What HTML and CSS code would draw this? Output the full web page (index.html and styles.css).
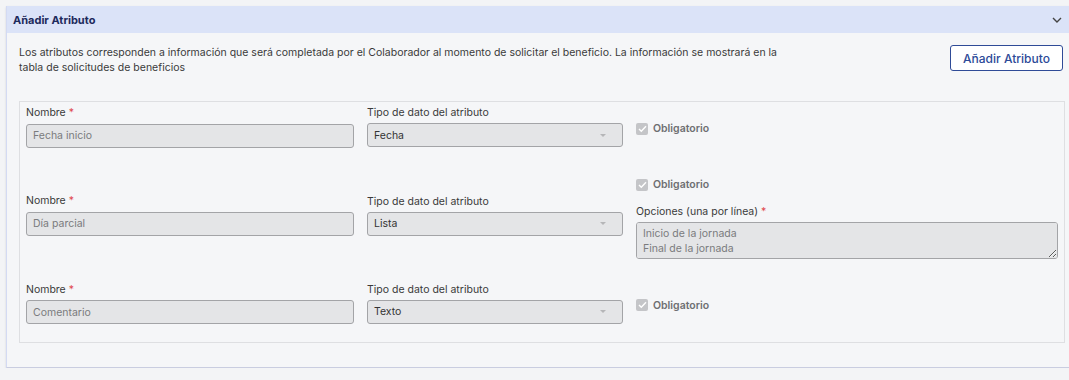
FILE: index.html
```html
<!DOCTYPE html>
<html lang="es">
<head>
    <meta charset="UTF-8">
    <meta name="viewport" content="width=device-width, initial-scale=1.0">
    <title>Añadir Atributo</title>
    <link rel="stylesheet" href="styles.css">
</head>
<body>
    <section class="panel">
        <header class="panel-header">
            <h2>Añadir Atributo</h2>
            <svg class="chevron" width="10" height="6" viewBox="0 0 10 6">
                <path d="M1 1l4 4 4-4" fill="none" stroke="#444" stroke-width="1.4"/>
            </svg>
        </header>

        <div class="panel-body">
            <div class="intro">
                <p>Los atributos corresponden a información que será completada por el Colaborador al momento de solicitar el beneficio. La información se mostrará en la tabla de solicitudes de beneficios</p>
                <button type="button" class="btn-outline">Añadir Atributo</button>
            </div>

            <div class="attr-list">
                <!-- fila 1 -->
                <div class="attr-row">
                    <div class="field">
                        <label>Nombre <span class="req">*</span></label>
                        <input type="text" class="input" value="Fecha inicio" disabled>
                    </div>
                    <div class="field">
                        <label>Tipo de dato del atributo</label>
                        <div class="select">Fecha<span class="caret"></span></div>
                    </div>
                    <div class="extra">
                        <div class="check"><span class="box"><svg width="9" height="8" viewBox="0 0 9 8"><path d="M1 4l2.3 2.3L8 1.3" fill="none" stroke="#fff" stroke-width="1.4"/></svg></span>Obligatorio</div>
                    </div>
                </div>

                <!-- fila 2 -->
                <div class="attr-row">
                    <div class="field">
                        <label>Nombre <span class="req">*</span></label>
                        <input type="text" class="input" value="Día parcial" disabled>
                    </div>
                    <div class="field">
                        <label>Tipo de dato del atributo</label>
                        <div class="select">Lista<span class="caret"></span></div>
                    </div>
                    <div class="extra extra-list">
                        <div class="check"><span class="box"><svg width="9" height="8" viewBox="0 0 9 8"><path d="M1 4l2.3 2.3L8 1.3" fill="none" stroke="#fff" stroke-width="1.4"/></svg></span>Obligatorio</div>
                        <label class="opt-label">Opciones (una por línea) <span class="req">*</span></label>
                        <textarea class="textarea" rows="2" disabled>Inicio de la jornada
Final de la jornada</textarea>
                    </div>
                </div>

                <!-- fila 3 -->
                <div class="attr-row">
                    <div class="field">
                        <label>Nombre <span class="req">*</span></label>
                        <input type="text" class="input" value="Comentario" disabled>
                    </div>
                    <div class="field">
                        <label>Tipo de dato del atributo</label>
                        <div class="select">Texto<span class="caret"></span></div>
                    </div>
                    <div class="extra">
                        <div class="check"><span class="box"><svg width="9" height="8" viewBox="0 0 9 8"><path d="M1 4l2.3 2.3L8 1.3" fill="none" stroke="#fff" stroke-width="1.4"/></svg></span>Obligatorio</div>
                    </div>
                </div>
            </div>
        </div>
    </section>
</body>
</html>
```

FILE: styles.css
```css
/* base */
html, body {
    overflow: hidden;
}
body {
    font-family: Inter, "Noto Sans", sans-serif;
    background-color: #f3f4f6;
    margin: 0;
    padding: 6px 0 0 6px;
    color: #333;
}

/* tarjeta */
.panel {
    width: 1070px;
    background-color: #f5f6f8;
    border-left: 1px solid #d3daf3;
    border-bottom: 1px solid #c9cde0;
    box-shadow: 0 1px 2px rgba(0, 0, 0, 0.12);
    padding-bottom: 24px;
}
.panel-header {
    background-color: #dbe3f8;
    height: 27px;
    display: flex;
    align-items: center;
    justify-content: space-between;
    padding: 0 15px 0 6px;
}
.panel-header h2 {
    margin: 0;
    font-size: 11px;
    font-weight: 700;
    color: #1d2a5c;
}

.panel-body {
    padding: 12px 14px 0 12px;
}

/* texto + boton */
.intro {
    display: flex;
    justify-content: space-between;
    align-items: flex-start;
    margin-bottom: 26px;
}
.intro p {
    margin: 0;
    width: 782px;
    font-size: 10.5px;
    line-height: 15px;
    color: #3a3a3a;
}
.btn-outline {
    font-family: Inter, "Noto Sans", sans-serif;
    font-size: 12px;
    font-weight: 500;
    color: #2c4a98;
    background-color: #fff;
    border: 1px solid #2f4b97;
    border-radius: 3px;
    width: 113px;
    height: 26px;
    padding: 0;
}

/* lista de atributos */
.attr-list {
    border: 1px solid #dedfe2;
    padding: 4px 6px 18px 6px;
    display: flex;
    flex-direction: column;
    gap: 24px;
    width: 1032px;
}
.attr-row {
    display: grid;
    grid-template-columns: 328px 256px 1fr;
    column-gap: 13px;
    align-items: center;
}
.field label,
.opt-label {
    display: block;
    font-size: 10.5px;
    line-height: 13px;
    color: #3a3a3a;
    margin-bottom: 4px;
}
.req {
    color: #e0474c;
}
.input,
.select,
.textarea {
    box-sizing: border-box;
    width: 100%;
    background-color: #e4e5e7;
    border: 1px solid #a3a4a7;
    border-radius: 3px;
    font-family: Inter, "Noto Sans", sans-serif;
    font-size: 10.5px;
}
.input {
    height: 24px;
    padding: 0 6px;
    color: #7a7b7d;
    margin: 0;
}
.select {
    height: 24px;
    padding: 0 6px;
    color: #333;
    display: flex;
    align-items: center;
    justify-content: space-between;
}
.caret {
    width: 0;
    height: 0;
    border-left: 3px solid transparent;
    border-right: 3px solid transparent;
    border-top: 3px solid #b5b6b8;
    margin-right: 10px;
}

/* columna derecha */
.extra {
    padding-top: 4px;
}
.extra-list {
    padding-top: 5px;
}
.check {
    display: flex;
    align-items: center;
    font-size: 10.5px;
    font-weight: 600;
    color: #6e6f72;
    height: 16px;
}
.box {
    width: 12px;
    height: 12px;
    border-radius: 2px;
    background-color: #c4c5c8;
    display: inline-flex;
    align-items: center;
    justify-content: center;
    margin: 0 5px 0 0;
}
.opt-label {
    margin-top: 12px;
}
.textarea {
    display: block;
    height: 37px;
    padding: 3px 6px;
    line-height: 15px;
    color: #7a7b7d;
    resize: vertical;
    margin: 0;
}
```
